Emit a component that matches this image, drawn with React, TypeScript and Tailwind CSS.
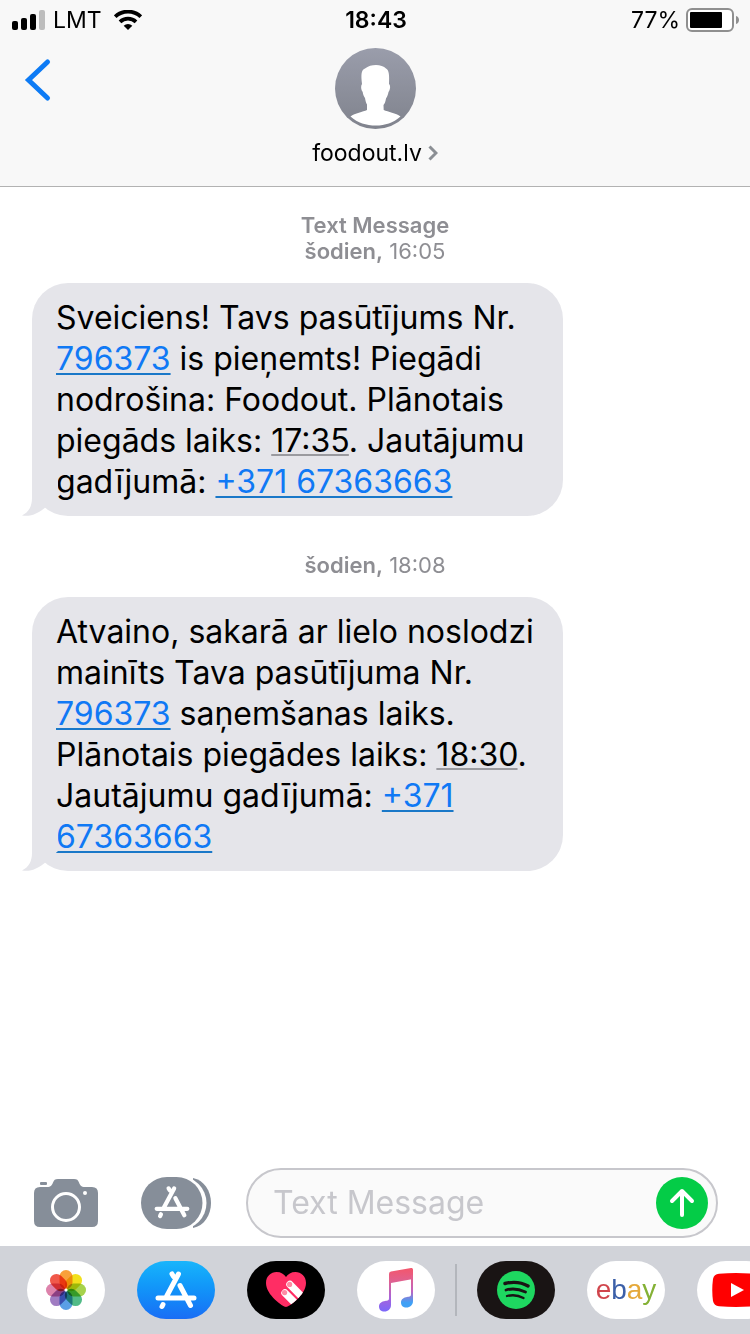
import { useState } from "react";
import type { ReactNode } from "react";

const linkClass =
  "text-[#1079f5] underline decoration-[#1a78c8] decoration-2 underline-offset-3 [text-decoration-skip-ink:none]";
const timeClass =
  "underline decoration-[#9a9a9f] decoration-2 underline-offset-2 [text-decoration-skip-ink:none]";
const pillClass =
  "flex h-[58px] w-[78px] shrink-0 items-center justify-center overflow-hidden rounded-full";

function SignalIcon() {
  return (
    <svg width="33" height="20" viewBox="0 0 33 20" aria-hidden="true">
      <rect x="0" y="11" width="6" height="9" rx="2" />
      <rect x="9" y="8" width="6" height="12" rx="2" />
      <rect x="18" y="4" width="6" height="16" rx="2" />
      <rect x="27" y="0" width="6" height="20" rx="2" fill="#bdbdbd" />
    </svg>
  );
}

function WifiIcon() {
  return (
    <svg width="28" height="20" viewBox="0 0 28 20" aria-hidden="true">
      <g fill="none" stroke="#000" strokeWidth="3.8">
        <path d="M1.2 6.7A18.5 18.5 0 0 1 26.8 6.7" />
        <path d="M6 11.9A11.6 11.6 0 0 1 22 11.9" />
      </g>
      <path d="M9.7 15.8A6.3 6.3 0 0 1 18.3 15.8L14 20Z" />
    </svg>
  );
}

function BatteryIcon() {
  return (
    <svg width="54" height="24" viewBox="0 0 54 24" aria-hidden="true">
      <rect x="1" y="1" width="46" height="22" rx="5" fill="#fff" stroke="#8f8f8f" strokeWidth="2" />
      <rect x="4" y="4" width="32" height="16" rx="1" />
      <path d="M50 8C54 9 54 15 50 16Z" fill="#8f8f8f" />
    </svg>
  );
}

function Avatar() {
  return (
    <svg width="81" height="81" viewBox="0 0 81 81" aria-hidden="true">
      <defs>
        <linearGradient id="avatar" x1="0" y1="0" x2="0" y2="1">
          <stop offset="0" stopColor="#9a9dab" />
          <stop offset="1" stopColor="#80838d" />
        </linearGradient>
      </defs>
      <circle cx="40.5" cy="40.5" r="40.5" fill="url(#avatar)" />
      <path
        fill="#fff"
        d="M41 17C45 17 49 18.5 51 20.5C54 22 54.5 27 54 36C56 38 55 42 53.5 44C53 47 52 49 51 50.5C50.5 54 49.5 56 48.5 57L48.7 62C53 64 61 65 65.5 68.5C58 75 50 77.5 41 77.5C31 77.5 23 75 15.5 68.5C20 65 28 64 32 62L32 56.5C31 55 30.5 53 30 50C28.5 48 28 46 27.7 44C26 42 25.5 38 27 36C26 27 26 22 30 20.5C33 18 37 17 41 17Z"
      />
    </svg>
  );
}

const storeStrokes = "M23.5 4L11.5 26.5M17 4L18.5 6.5M25 15.5L35.5 35.5M8 34.5L7 36.5M3 28H39";

function StoreIcon() {
  return (
    <svg width="42" height="40" viewBox="0 0 42 40" fill="none" stroke="#fff" strokeWidth="5" strokeLinecap="round" aria-hidden="true">
      <path d={storeStrokes} />
    </svg>
  );
}

function CameraIcon() {
  return (
    <svg width="64" height="48" viewBox="0 0 64 48" fill="#868e99" aria-hidden="true">
      <path d="M6 8H13C17 8 18 6 19 3.5C20 1 21 0 24 0H40C43 0 44 1 45 3.5C46 6 47 8 51 8H58Q64 8 64 14V42Q64 48 58 48H6Q0 48 0 42V14Q0 8 6 8Z" />
      <rect x="6" y="3" width="7" height="3" rx="1" />
      <circle cx="32" cy="28" r="13.5" fill="none" stroke="#fff" strokeWidth="3" />
      <circle cx="51" cy="14" r="2" fill="#fff" />
    </svg>
  );
}

function AppDrawerIcon() {
  return (
    <svg width="70" height="52" viewBox="0 0 70 52" aria-hidden="true">
      <path d="M52 1C63 3 70 14 70 26S63 49 52 51Z" fill="#868e99" />
      <rect x="-4" y="-1" width="69.5" height="54" rx="27" fill="#fff" />
      <rect width="61.5" height="52" rx="26" fill="#868e99" />
      <svg x="12" y="8" width="38" height="34" viewBox="0 0 42 40" fill="none" stroke="#fff" strokeWidth="5" strokeLinecap="round">
        <path d={storeStrokes} />
      </svg>
    </svg>
  );
}

const petals = ["#f9a03a", "#f2e01c", "#a6d24c", "#52bb87", "#5a9fe6", "#a07cc2", "#dd82ab", "#f0584a"];

function PhotosIcon() {
  return (
    <svg width="42" height="42" viewBox="-21 -21 42 42" aria-hidden="true">
      {petals.map((color, i) => (
        <rect
          key={color}
          x="-6.5"
          y="-20"
          width="13"
          height="19"
          rx="6.5"
          fill={color}
          transform={`rotate(${i * 45})`}
          className="mix-blend-multiply"
        />
      ))}
      <circle r="1.5" fill="#fff" />
    </svg>
  );
}

function HeartIcon() {
  return (
    <svg width="42" height="38" viewBox="0 0 42 38" aria-hidden="true">
      <defs>
        <clipPath id="heart">
          <path d="M21 36C18 36 1 24 1 12C1 5 6 1 11.5 1C16 1 19 3 21 6C23 3 26 1 30.5 1C36 1 41 5 41 12C41 24 24 36 21 36Z" />
        </clipPath>
      </defs>
      <g clipPath="url(#heart)">
        <rect width="42" height="38" fill="#ff2d64" />
        <path d="M20 22L34 36M25 13.5L42 31" fill="none" stroke="#fff" strokeWidth="7.4" strokeLinecap="round" />
        <circle cx="19.6" cy="21.6" r="2.6" fill="#ff8ba5" />
        <circle cx="24.6" cy="13.4" r="2.6" fill="#ff8ba5" />
      </g>
    </svg>
  );
}

function MusicIcon() {
  return (
    <svg width="36" height="46" viewBox="0 0 36 46" aria-hidden="true">
      <defs>
        <linearGradient id="music" x1="0" y1="0" x2="0" y2="1">
          <stop offset="0" stopColor="#f4566b" />
          <stop offset="0.3" stopColor="#e0618f" />
          <stop offset="0.7" stopColor="#a563dc" />
          <stop offset="1" stopColor="#7b68fa" />
        </linearGradient>
        <linearGradient id="note" x1="0" y1="0" x2="0" y2="1">
          <stop offset="0" stopColor="#e85f86" />
          <stop offset="0.5" stopColor="#c063c0" />
          <stop offset="0.85" stopColor="#3fa0f5" />
        </linearGradient>
      </defs>
      <path fill="url(#music)" d="M11 7Q11 5 13 4.6L33 1Q35 .6 35 2.5V12L13 16V38C13 42 10 44.5 6.5 44.5C3 44.5 1 42.5 1 39.5C1 36 4 34.5 7 34C10 33.5 11 33.5 11 31Z" />
      <path fill="url(#note)" d="M33 8H35V34C35 38 32 40.5 28.5 40.5C25 40.5 23 38.5 23 35.5C23 32 26 30.5 29 30C32 29.5 33 29.5 33 27Z" />
    </svg>
  );
}

function SpotifyIcon() {
  return (
    <svg width="38" height="38" viewBox="0 0 38 38" aria-hidden="true">
      <circle cx="19" cy="19" r="19" fill="#1ed760" />
      <g fill="none" stroke="#191414" strokeLinecap="round">
        <path d="M8 12.5C16 10.5 24 11 31 15" strokeWidth="3.4" />
        <path d="M9 19C16 17 22 18 28.5 21" strokeWidth="2.8" />
        <path d="M10 25C16 23.5 21 24 26.5 27" strokeWidth="2.3" />
      </g>
    </svg>
  );
}

function YoutubeIcon() {
  return (
    <svg width="48" height="34" viewBox="0 0 48 34" aria-hidden="true">
      <path fill="#f00" d="M7 .8Q24-.6 41 .8Q46 1.2 47 6Q48.5 17 47 28Q46 32.8 41 33.2Q24 34.6 7 33.2Q2 32.8 1 28Q-.5 17 1 6Q2 1.2 7 .8Z" />
      <path fill="#fff" d="M19 10L32 17L19 24Z" />
    </svg>
  );
}

function Bubble({ children }: { children: ReactNode }) {
  return (
    <div className="relative ml-8 w-fit min-w-[531px] rounded-[36px] bg-[#e5e5ea] px-6 py-3.5 text-[32px] leading-[41px] whitespace-nowrap">
      <svg className="absolute bottom-0 -left-2.5" width="36" height="40" viewBox="0 0 36 40" fill="#e5e5ea" aria-hidden="true">
        <path d="M10 0V22C10 30 7 36 0 39.5C9 41 17 37 24 31L36 20V0Z" />
      </svg>
      {children}
    </div>
  );
}

export default function App() {
  const [draft, setDraft] = useState("");

  return (
    <div className="flex min-h-screen flex-col overflow-hidden bg-white text-black" style={{ fontFamily: 'Inter, "Noto Sans", sans-serif' }}>
      <header className="border-b border-[#b2b2b2] bg-[#f8f8f8]">
        {/* Status bar */}
        <div className="grid h-10 grid-cols-[1fr_auto_1fr] items-center pr-2.5 pl-3 text-[23px]">
          <div className="flex items-center gap-2">
            <SignalIcon />
            <span>LMT</span>
            <span className="ml-1"><WifiIcon /></span>
          </div>
          <span className="font-semibold">18:43</span>
          <div className="flex items-center justify-end gap-1.5">
            <span>77%</span>
            <BatteryIcon />
          </div>
        </div>

        <div className="grid grid-cols-[1fr_auto_1fr] items-start pt-2 pb-[17px]">
          <button type="button" aria-label="Back" className="w-fit py-2.5 pl-6">
            <svg width="28" height="44" viewBox="0 0 28 44" fill="none" stroke="#0d7bf5" strokeWidth="5" strokeLinecap="round" aria-hidden="true">
              <path d="M23.5 4L4.5 22L23.5 40" />
            </svg>
          </button>
          <button type="button" className="flex flex-col items-center gap-2">
            <Avatar />
            <span className="flex items-center gap-1.5 text-[23px] leading-8">
              foodout.lv
              <svg width="10" height="16" viewBox="0 0 10 16" fill="none" stroke="#8b8f94" strokeWidth="3" aria-hidden="true">
                <path d="M1.5 1.5L8 8L1.5 14.5" />
              </svg>
            </span>
          </button>
        </div>
      </header>

      {/* Conversation */}
      <main className="flex-1">
        <p className="pt-[25px] pb-[19px] text-center text-[22px] leading-[26px] text-[#8e8e93]">
          <span className="font-semibold">Text Message</span>
          <br />
          <span className="font-semibold">šodien,</span> 16:05
        </p>
        <Bubble>
          Sveiciens! Tavs pasūtījums Nr.
          <br />
          <a href="#order" className={linkClass}>796373</a> is pieņemts! Piegādi
          <br />
          nodrošina: Foodout. Plānotais
          <br />
          piegāds laiks: <span className={timeClass}>17:35</span>. Jautājumu
          <br />
          gadījumā: <a href="tel:+37167363663" className={linkClass}>+371 67363663</a>
        </Bubble>
        <p className="pt-9 pb-[19px] text-center text-[22px] leading-[26px] text-[#8e8e93]">
          <span className="font-semibold">šodien,</span> 18:08
        </p>
        <Bubble>
          Atvaino, sakarā ar lielo noslodzi
          <br />
          mainīts Tava pasūtījuma Nr.
          <br />
          <a href="#order" className={linkClass}>796373</a> saņemšanas laiks.
          <br />
          Plānotais piegādes laiks: <span className={timeClass}>18:30</span>.
          <br />
          Jautājumu gadījumā: <a href="tel:+37167363663" className={linkClass}>+371<br />67363663</a>
        </Bubble>
      </main>

      {/* Composer */}
      <form className="flex items-center pr-8 pb-2 pl-[34px]" onSubmit={(e) => e.preventDefault()}>
        <button type="button" aria-label="Camera"><CameraIcon /></button>
        <button type="button" aria-label="Apps" className="ml-[43px]"><AppDrawerIcon /></button>
        <div className="ml-[35px] flex h-[70px] min-w-0 flex-1 items-center rounded-full border-2 border-[#c7c7cc] bg-[#fafafa] pr-2 pl-[25px]">
          <input
            type="text"
            aria-label="Text Message"
            placeholder="Text Message"
            value={draft}
            onChange={(e) => setDraft(e.target.value)}
            className="min-w-0 flex-1 bg-transparent text-[32px] outline-none placeholder:text-[#c7c7cc]"
          />
          <button type="submit" aria-label="Send" className="flex size-[52px] shrink-0 items-center justify-center rounded-full bg-[#04cc47]">
            <svg width="26" height="30" viewBox="0 0 26 30" fill="none" stroke="#fff" strokeWidth="4" strokeLinecap="round" strokeLinejoin="round" aria-hidden="true">
              <path d="M13 27V3M3 13L13 3L23 13" />
            </svg>
          </button>
        </div>
      </form>

      {/* App strip */}
      <nav className="flex h-[88px] items-center overflow-hidden bg-[#d1d3d9] pl-[27px]">
        <div className="flex gap-8">
          <button type="button" aria-label="Photos" className={`${pillClass} bg-white`}><PhotosIcon /></button>
          <button type="button" aria-label="App Store" className={`${pillClass} bg-linear-to-b from-[#19b5fb] to-[#1a6df5]`}><StoreIcon /></button>
          <button type="button" aria-label="Digital Touch" className={`${pillClass} bg-black`}><HeartIcon /></button>
          <button type="button" aria-label="Music" className={`${pillClass} bg-white`}><MusicIcon /></button>
        </div>
        <div className="mx-5 h-[52px] w-0.5 shrink-0 bg-[#b3b6bc]" />
        <div className="flex gap-8">
          <button type="button" aria-label="Spotify" className={`${pillClass} bg-[#191414]`}><SpotifyIcon /></button>
          <button type="button" className={`${pillClass} bg-white text-[28px]`} style={{ fontFamily: '"Liberation Sans", sans-serif' }}>
            <span className="text-[#d0454c]">e</span>
            <span className="text-[#3b5fa8]">b</span>
            <span className="text-[#e5a93a]">a</span>
            <span className="text-[#84b135]">y</span>
          </button>
          <button type="button" aria-label="YouTube" className={`${pillClass} bg-white`}><YoutubeIcon /></button>
        </div>
      </nav>
    </div>
  );
}
